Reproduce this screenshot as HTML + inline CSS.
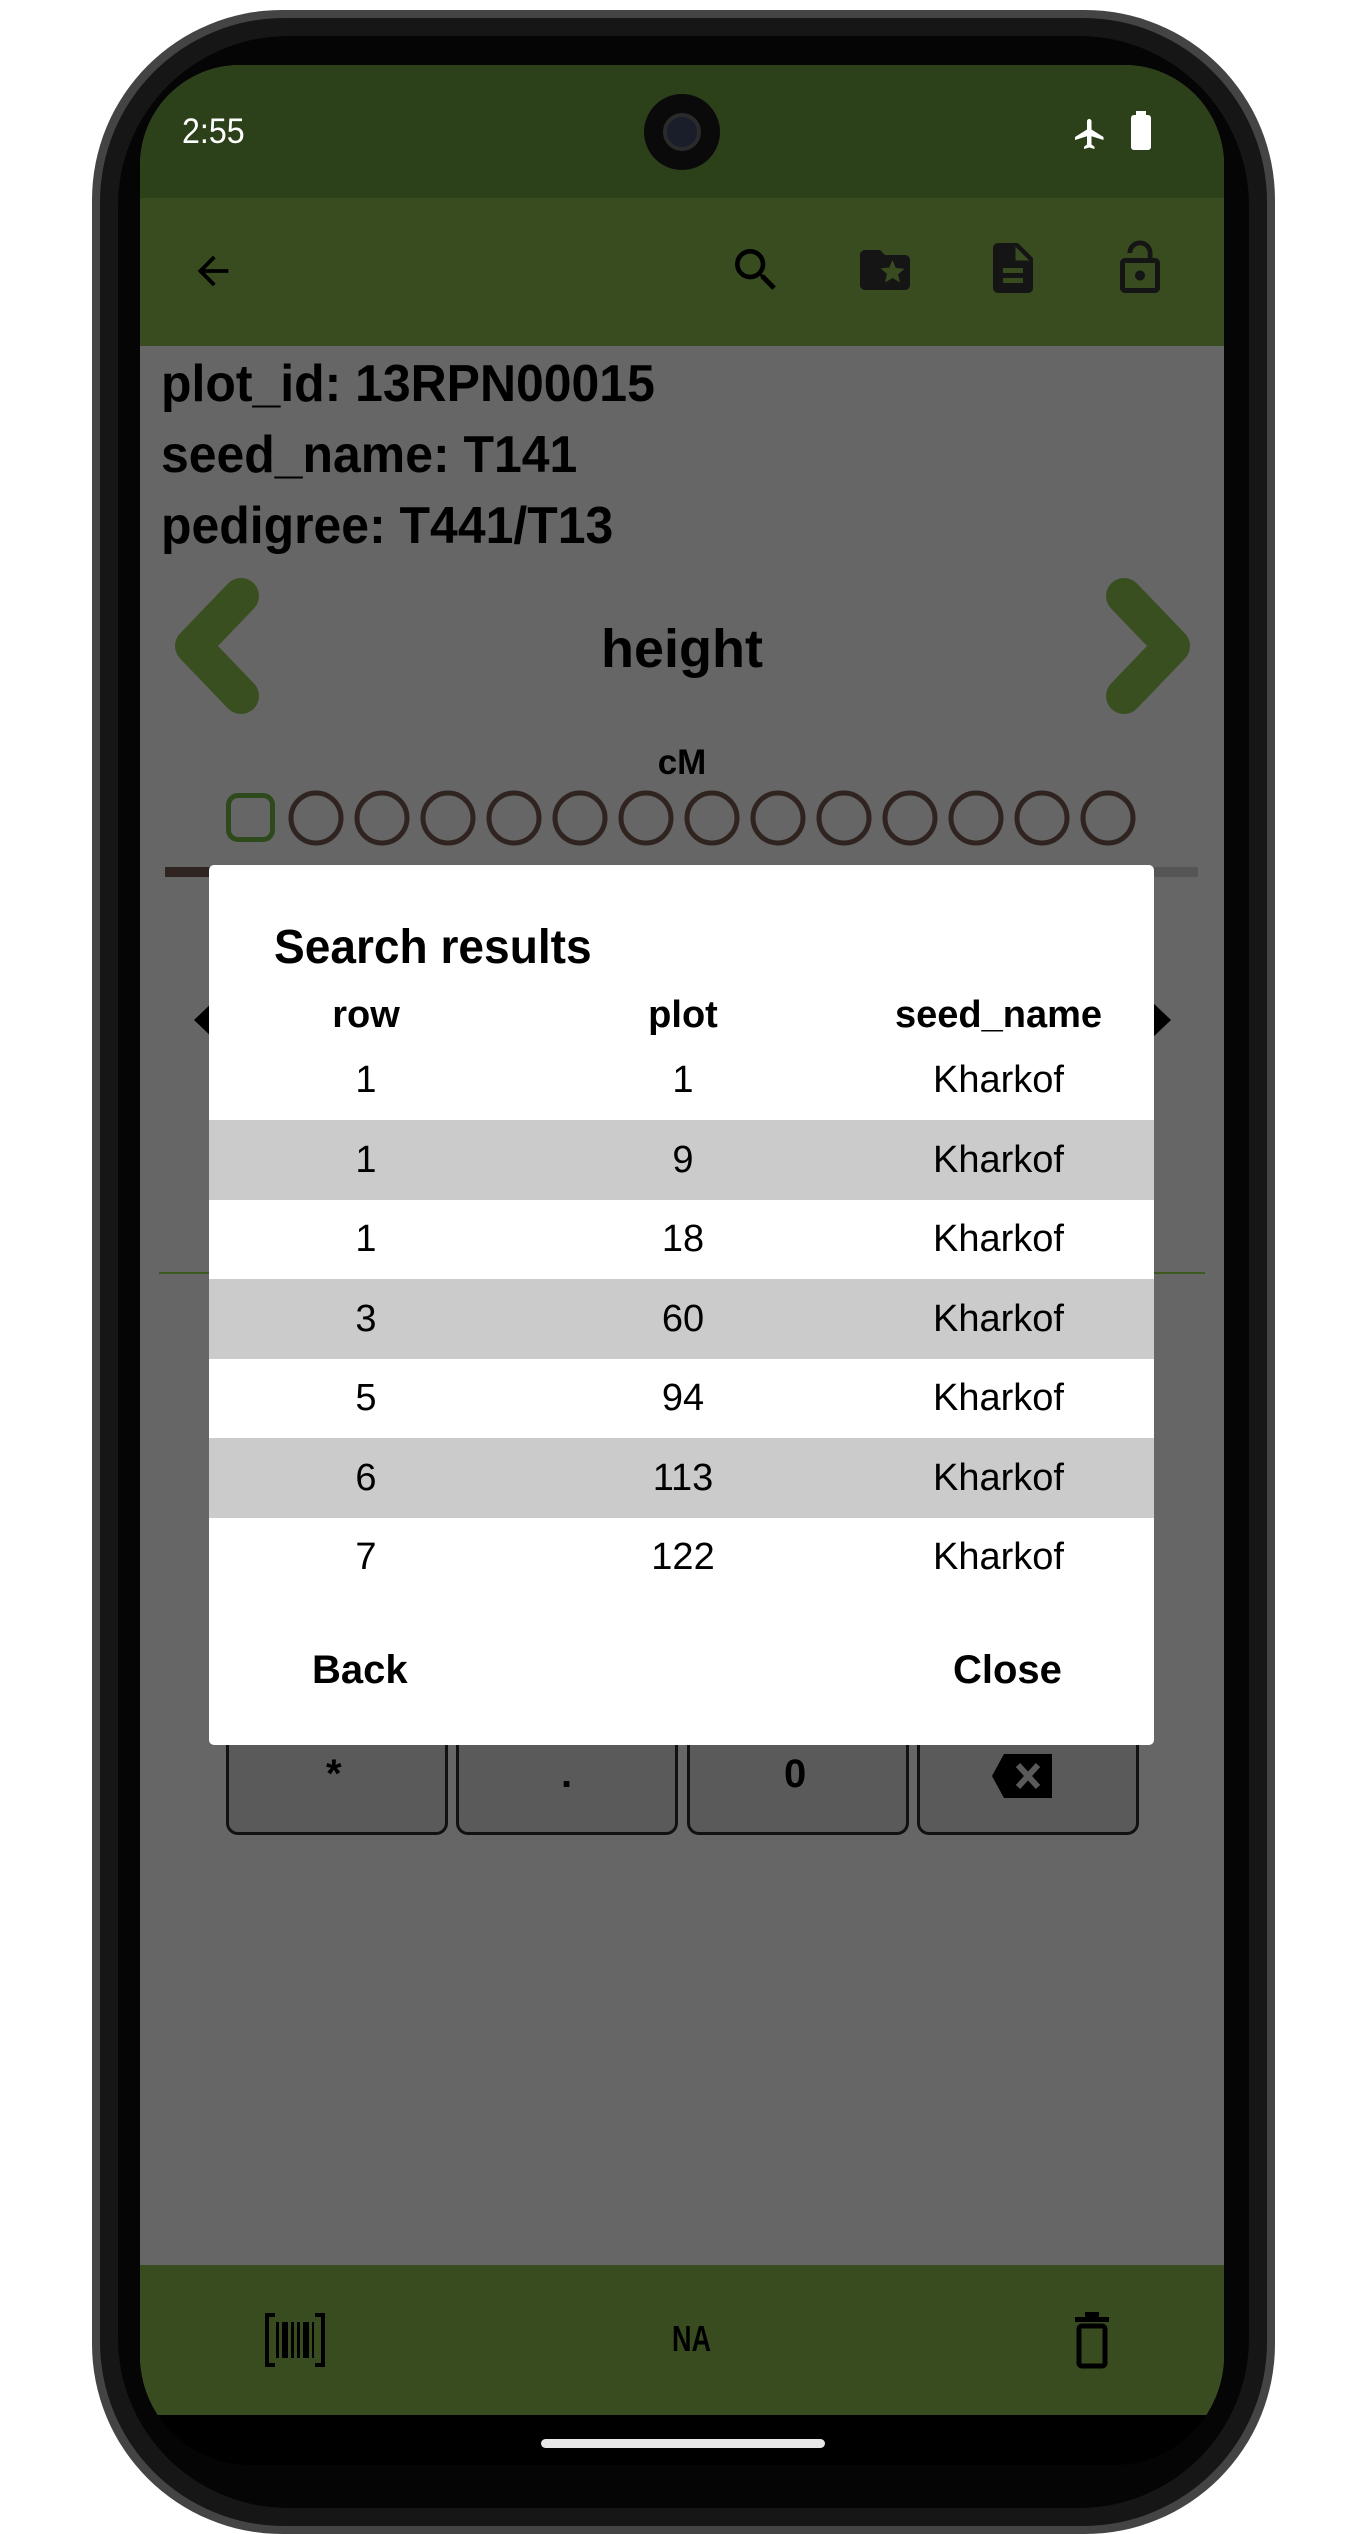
<!DOCTYPE html>
<html><head><meta charset="utf-8"><style>
*{margin:0;padding:0;box-sizing:border-box}
body{width:1367px;height:2533px;background:#fff;position:relative;overflow:hidden;font-family:"Liberation Sans",sans-serif}
.abs{position:absolute}
.t{position:absolute;white-space:nowrap;color:#000}
</style></head><body>
<div class="abs" style="left:92px;top:10px;width:1183px;height:2524px;border-radius:190px;background:#444"></div>
<div class="abs" style="left:100px;top:18px;width:1167px;height:2508px;border-radius:184px;background:#161616"></div>
<div class="abs" style="left:118px;top:36px;width:1131px;height:2472px;border-radius:170px;background:#050505"></div>
<div class="abs" style="left:140px;top:65px;width:1084px;height:2400px;border-radius:100px 100px 110px 110px;overflow:hidden;background:#000">
  <div class="abs" style="left:0;top:0;width:1084px;height:2350px;background:#666"></div>
  <div class="abs" style="left:0;top:0;width:1084px;height:133px;background:#2c4019"></div>
  <div class="abs" style="left:0;top:133px;width:1084px;height:148px;background:#394c20"></div>
  <div class="abs" style="left:0;top:2200px;width:1084px;height:150px;background:#394c20"></div>
</div>
<div class="abs" style="left:541px;top:2439px;width:284px;height:9px;border-radius:5px;background:#e8e8e8"></div>
<div class="t" style="left:182px;top:112px;font-size:35px;color:#fff;transform:scaleX(0.92);transform-origin:left">2:55</div>
<div class="abs" style="left:644px;top:94px;width:76px;height:76px;border-radius:50%;background:#0a0a0a"></div>
<div class="abs" style="left:663px;top:113px;width:38px;height:38px;border-radius:50%;background:#1a1d2a;border:4px solid #2a2a2a"></div>
<svg class="abs" style="left:1072px;top:114px" width="36" height="40" viewBox="0 0 24 24"><path fill="#fff" d="M21 16v-2l-8-5V3.5C13 2.7 12.3 2 11.5 2S10 2.7 10 3.5V9l-8 5v2l8-2.5V19l-2 1.5V22l3.5-1 3.5 1v-1.5L13 19v-5.5z"/></svg>
<div class="abs" style="left:1131px;top:115px;width:20px;height:35px;border-radius:3px;background:#fff"></div>
<div class="abs" style="left:1136px;top:111px;width:10px;height:5px;background:#fff"></div>
<svg class="abs" style="left:190px;top:248px" width="46" height="46" viewBox="0 0 24 24"><path fill="#000" d="M20 11H7.8l5.6-5.6L12 4l-8 8 8 8 1.4-1.4L7.8 13H20z"/></svg>
<svg class="abs" style="left:728px;top:242px" width="56" height="56" viewBox="0 0 24 24"><path fill="#000" d="M15.5 14h-.8l-.3-.3c1-1.1 1.6-2.6 1.6-4.2a6.5 6.5 0 1 0-6.5 6.5c1.6 0 3.1-.6 4.2-1.6l.3.3v.8l5 5 1.5-1.5-5-5zm-6 0C7 14 5 12 5 9.5S7 5 9.5 5 14 7 14 9.5 12 14 9.5 14z"/></svg>
<svg class="abs" style="left:855px;top:240px" width="60" height="60" viewBox="0 0 24 24"><path fill="#151515" d="M20 6h-8l-2-2H4c-1.1 0-2 .9-2 2v12c0 1.1.9 2 2 2h16c1.1 0 2-.9 2-2V8c0-1.1-.9-2-2-2zm-2 11-3-1.8-3 1.8.8-3.4-2.6-2.3 3.5-.3L15 8l1.3 3.2 3.5.3-2.6 2.3z"/></svg>
<svg class="abs" style="left:983px;top:238px" width="60" height="60" viewBox="0 0 24 24"><path fill="#151515" d="M14 2H6c-1.1 0-2 .9-2 2v16c0 1.1.9 2 2 2h12c1.1 0 2-.9 2-2V8l-6-6zm2 16H8v-2h8v2zm0-4H8v-2h8v2zm-3-5V3.5L18.5 9H13z"/></svg>
<svg class="abs" style="left:1110px;top:236px" width="60" height="64" viewBox="0 0 24 24"><path fill="#151515" d="M12 17c1.1 0 2-.9 2-2s-.9-2-2-2-2 .9-2 2 .9 2 2 2zm6-9h-1V6c0-2.8-2.2-5-5-5S7 3.2 7 6h1.9c0-1.7 1.4-3.1 3.1-3.1s3.1 1.4 3.1 3.1v2H6c-1.1 0-2 .9-2 2v10c0 1.1.9 2 2 2h12c1.1 0 2-.9 2-2V10c0-1.1-.9-2-2-2zm0 12H6V10h12v10z"/></svg>
<div class="t" style="left:161px;top:354px;font-size:52px;font-weight:bold;line-height:60px;transform:scaleX(0.96);transform-origin:left">plot_id: 13RPN00015</div>
<div class="t" style="left:161px;top:425px;font-size:52px;font-weight:bold;line-height:60px;transform:scaleX(0.96);transform-origin:left">seed_name: T141</div>
<div class="t" style="left:161px;top:496px;font-size:52px;font-weight:bold;line-height:60px;transform:scaleX(0.96);transform-origin:left">pedigree: T441/T13</div>
<svg class="abs" style="left:165px;top:572px" width="100" height="148"><path d="M76 24 L28 74 L76 124" fill="none" stroke="#394f20" stroke-width="36" stroke-linecap="round" stroke-linejoin="round"/></svg>
<svg class="abs" style="left:1100px;top:572px" width="100" height="148"><path d="M24 24 L72 74 L24 124" fill="none" stroke="#394f20" stroke-width="36" stroke-linecap="round" stroke-linejoin="round"/></svg>
<div class="t" style="left:0;width:1364px;text-align:center;top:618px;font-size:54px;font-weight:bold">height</div>
<div class="t" style="left:0;width:1364px;text-align:center;top:743px;font-size:35px;font-weight:bold">cM</div>
<div class="abs" style="left:226px;top:793px;width:49px;height:49px;border:5px solid #2e4a1c;border-radius:12px"></div>
<svg class="abs" style="left:280px;top:785px" width="860" height="70">
<g fill="none" stroke="#302420" stroke-width="5">
<circle cx="36" cy="33" r="25"/><circle cx="102" cy="33" r="25"/><circle cx="168" cy="33" r="25"/><circle cx="234" cy="33" r="25"/><circle cx="300" cy="33" r="25"/><circle cx="366" cy="33" r="25"/><circle cx="432" cy="33" r="25"/><circle cx="498" cy="33" r="25"/><circle cx="564" cy="33" r="25"/><circle cx="630" cy="33" r="25"/><circle cx="696" cy="33" r="25"/><circle cx="762" cy="33" r="25"/><circle cx="828" cy="33" r="25"/>
</g></svg>
<div class="abs" style="left:165px;top:867px;width:60px;height:10px;background:#302420"></div>
<div class="abs" style="left:1150px;top:867px;width:48px;height:10px;background:#555"></div>
<div class="abs" style="left:185px;top:1000px;width:30px;height:40px;background:#000;clip-path:polygon(100% 0,30% 50%,100% 100%)"></div>
<div class="abs" style="left:1150px;top:1000px;width:30px;height:40px;background:#000;clip-path:polygon(0 0,70% 50%,0 100%)"></div>
<div class="abs" style="left:159px;top:1272px;width:1046px;height:2px;background:#3c5a20"></div>
<div class="abs" style="left:226px;top:1720px;width:222px;height:115px;background:#595a59;border:3px solid #111;border-radius:12px"></div>
<div class="abs" style="left:456px;top:1720px;width:222px;height:115px;background:#595a59;border:3px solid #111;border-radius:12px"></div>
<div class="abs" style="left:687px;top:1720px;width:222px;height:115px;background:#595a59;border:3px solid #111;border-radius:12px"></div>
<div class="abs" style="left:917px;top:1720px;width:222px;height:115px;background:#595a59;border:3px solid #111;border-radius:12px"></div>
<div class="t" style="left:326px;top:1752px;font-size:40px;font-weight:bold">*</div>
<div class="t" style="left:561px;top:1752px;font-size:40px;font-weight:bold">.</div>
<div class="t" style="left:784px;top:1752px;font-size:40px;font-weight:bold">0</div>
<svg class="abs" style="left:990px;top:1752px" width="66" height="48" viewBox="0 0 66 48"><path d="M14 2H62V46H14L2 24Z" fill="#000"/><path d="M28 13L48 35M48 13L28 35" stroke="#595a59" stroke-width="6"/></svg>
<div class="abs" style="left:209px;top:865px;width:945px;height:880px;background:#fff;border-radius:5px;overflow:hidden">
  <div class="abs" style="left:0;top:255px;width:945px;height:80px;background:#cbcbcb"></div>
  <div class="abs" style="left:0;top:414px;width:945px;height:80px;background:#cbcbcb"></div>
  <div class="abs" style="left:0;top:573px;width:945px;height:80px;background:#cbcbcb"></div>
</div>
<div class="t" style="left:274px;top:920px;font-size:48px;font-weight:bold;transform:scaleX(0.96);transform-origin:left">Search results</div>
<div style="position:absolute;left:209px;top:990px;width:945px;font-size:38px">
<div style="display:flex;height:50px;font-weight:bold;line-height:50px"><div style="width:314px;text-align:center">row</div><div style="width:320px;text-align:center">plot</div><div style="width:311px;text-align:center">seed_name</div></div>
</div>
<div style="position:absolute;left:209px;top:1041px;width:945px;font-size:38px;line-height:79.5px">
<div style="display:flex"><div style="width:314px;text-align:center">1</div><div style="width:320px;text-align:center">1</div><div style="width:311px;text-align:center">Kharkof</div></div>
<div style="display:flex"><div style="width:314px;text-align:center">1</div><div style="width:320px;text-align:center">9</div><div style="width:311px;text-align:center">Kharkof</div></div>
<div style="display:flex"><div style="width:314px;text-align:center">1</div><div style="width:320px;text-align:center">18</div><div style="width:311px;text-align:center">Kharkof</div></div>
<div style="display:flex"><div style="width:314px;text-align:center">3</div><div style="width:320px;text-align:center">60</div><div style="width:311px;text-align:center">Kharkof</div></div>
<div style="display:flex"><div style="width:314px;text-align:center">5</div><div style="width:320px;text-align:center">94</div><div style="width:311px;text-align:center">Kharkof</div></div>
<div style="display:flex"><div style="width:314px;text-align:center">6</div><div style="width:320px;text-align:center">113</div><div style="width:311px;text-align:center">Kharkof</div></div>
<div style="display:flex"><div style="width:314px;text-align:center">7</div><div style="width:320px;text-align:center">122</div><div style="width:311px;text-align:center">Kharkof</div></div>
</div>
<div class="t" style="left:312px;top:1648px;font-size:40px;font-weight:bold">Back</div>
<div class="t" style="left:953px;top:1648px;font-size:40px;font-weight:bold">Close</div>
<svg class="abs" style="left:263px;top:2312px" width="64" height="56" viewBox="0 0 64 56"><g fill="none" stroke="#000" stroke-width="4"><path d="M12 3H4V53H12M52 3H60V53H52"/></g><g fill="#000"><rect x="13" y="10" width="3" height="36"/><rect x="19" y="10" width="6" height="36"/><rect x="28" y="10" width="3" height="36"/><rect x="34" y="10" width="3" height="36"/><rect x="40" y="10" width="6" height="36"/><rect x="49" y="10" width="2" height="36"/></g></svg>
<div class="t" style="left:672px;top:2318px;font-size:36px;font-weight:bold;transform:scaleX(0.75);transform-origin:left">NA</div>
<svg class="abs" style="left:1072px;top:2312px" width="40" height="58" viewBox="0 0 40 58"><rect x="3" y="5" width="34" height="5" fill="#000"/><rect x="13" y="0" width="14" height="6" fill="#000"/><rect x="7" y="14" width="26" height="40" rx="3" fill="none" stroke="#000" stroke-width="5"/></svg>
</body></html>
